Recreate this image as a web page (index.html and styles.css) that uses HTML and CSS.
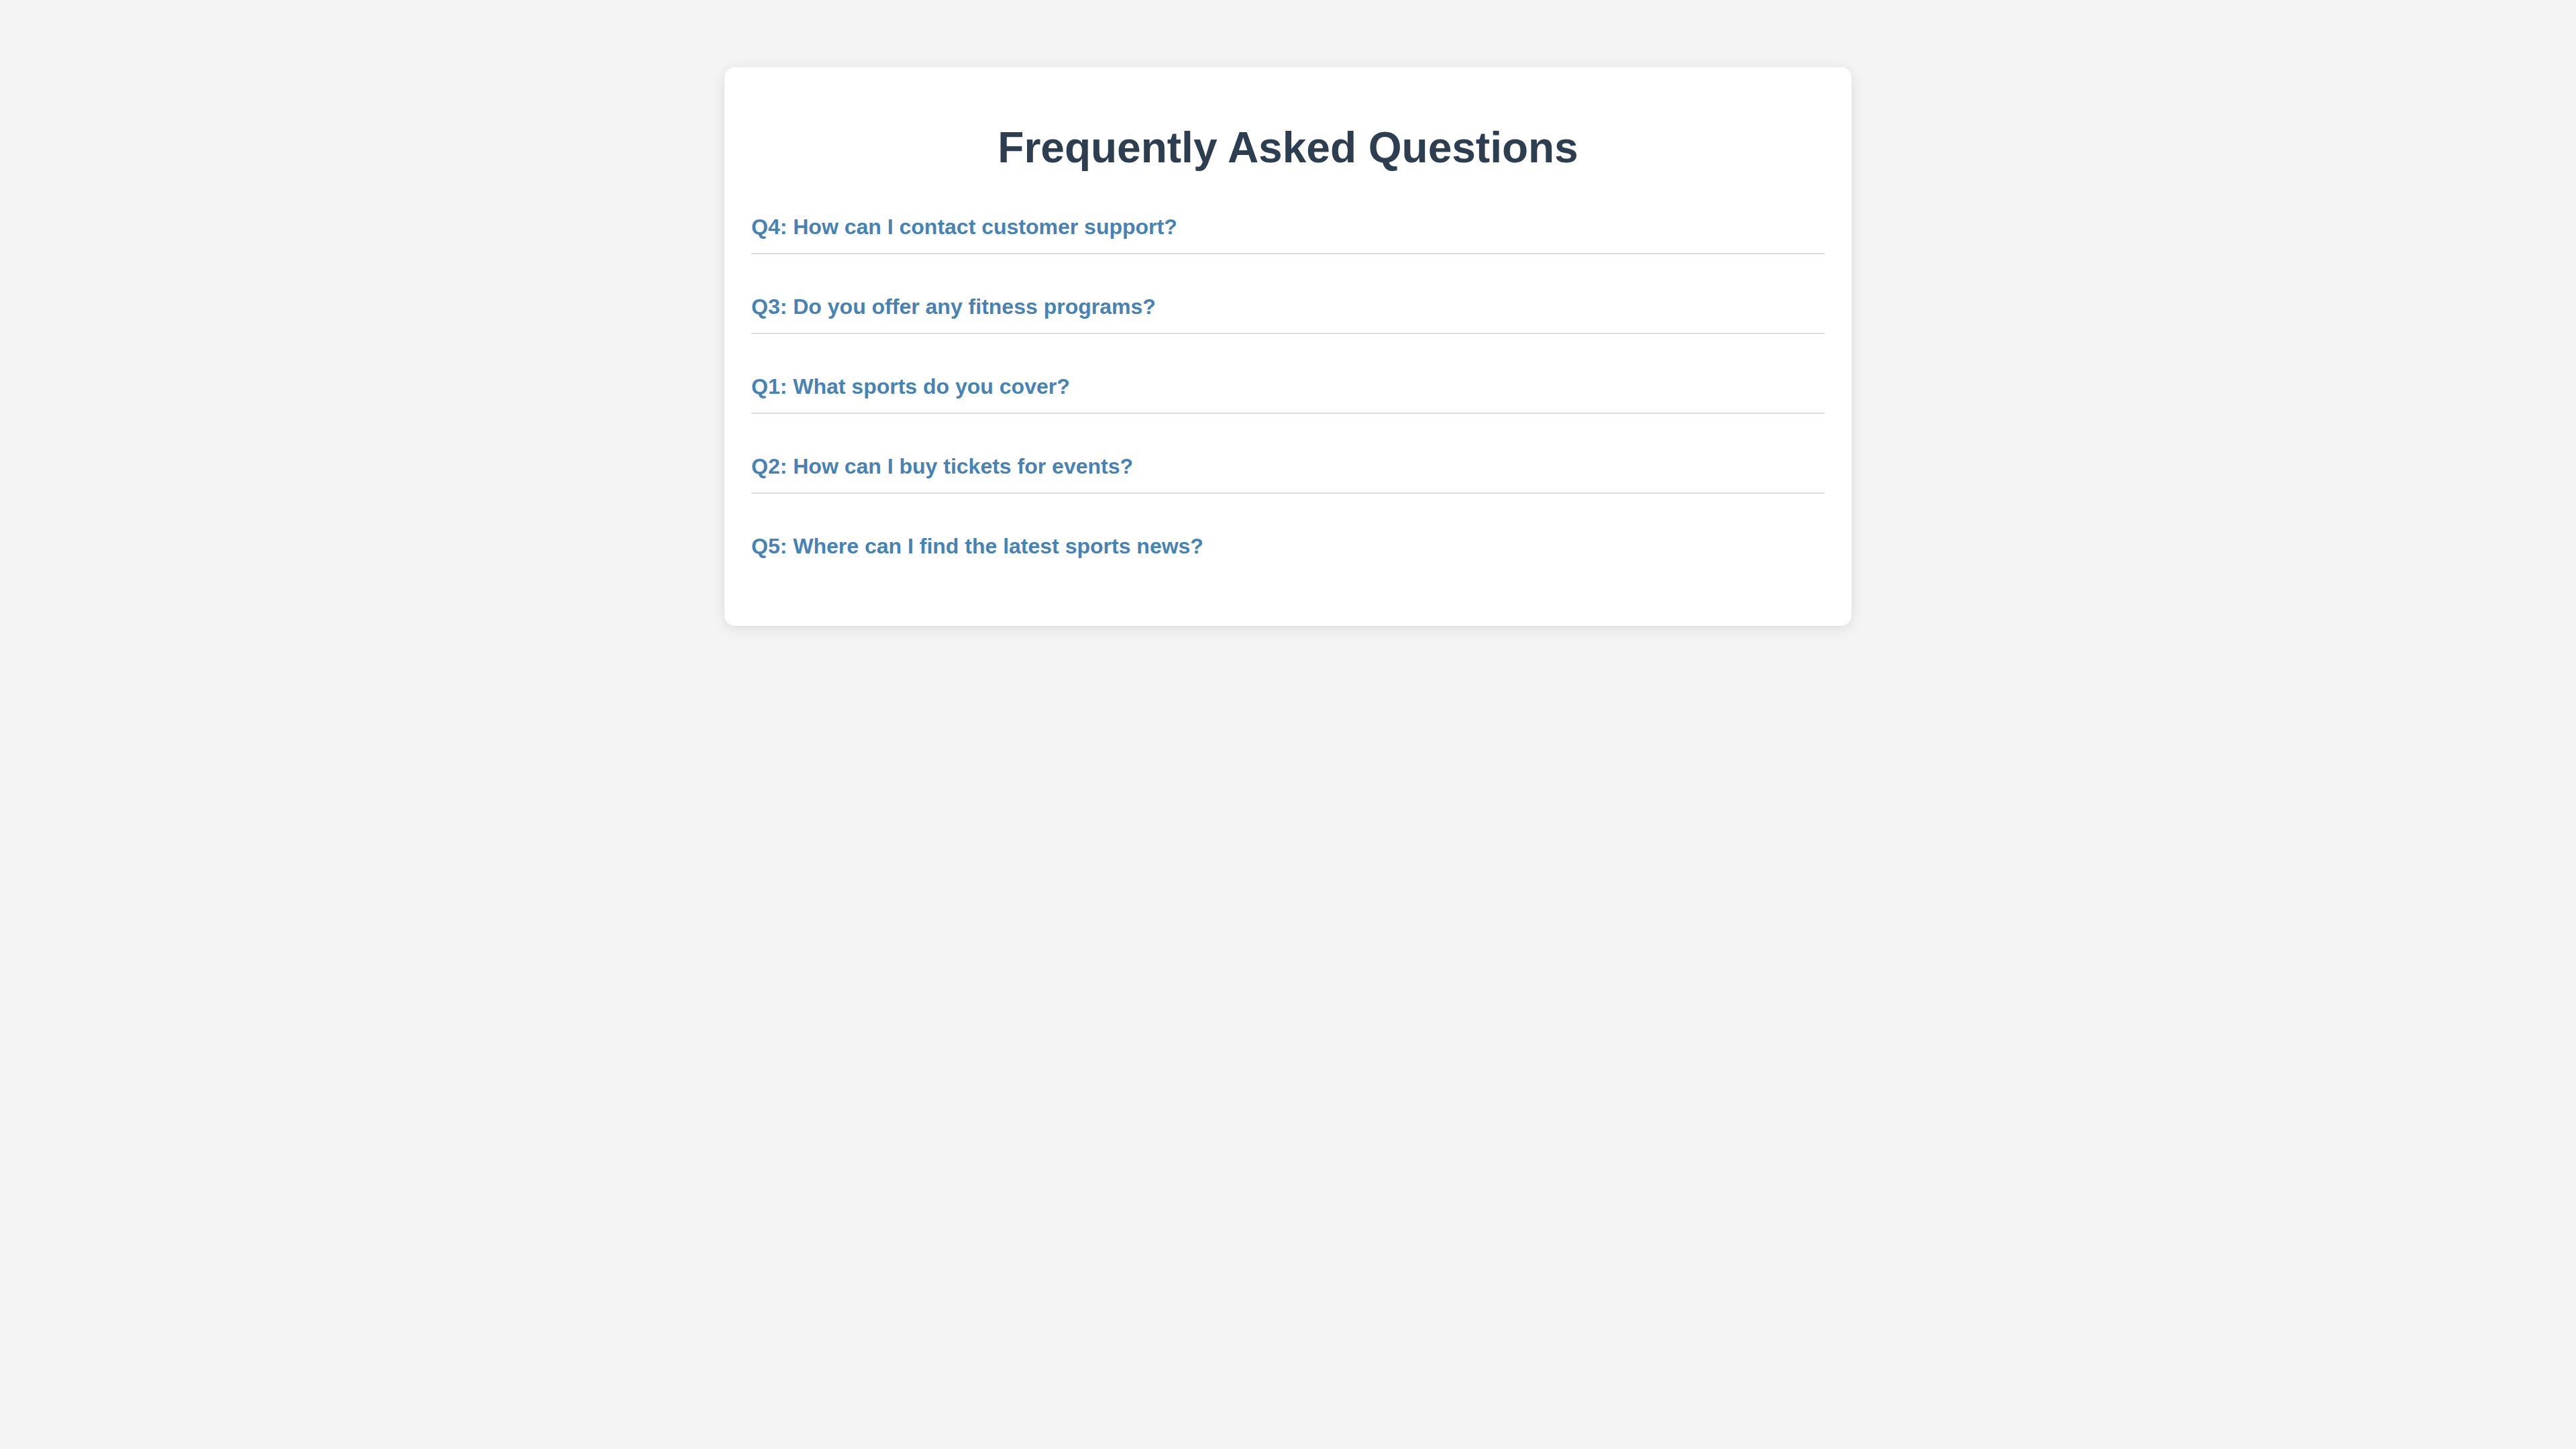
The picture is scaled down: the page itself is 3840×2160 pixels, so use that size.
FILE: index.html
```html
<!DOCTYPE html>
<html lang="en">
<head>
<meta charset="utf-8">
<title>FAQ</title>
<link rel="stylesheet" href="styles.css">
</head>
<body>
<main class="faq-container">
  <h1 class="faq-title">Frequently Asked Questions</h1>
  <div class="faq-list">
    <div class="faq-item">
      <div class="faq-question">Q4: How can I contact customer support?</div>
    </div>
    <div class="faq-item">
      <div class="faq-question">Q3: Do you offer any fitness programs?</div>
    </div>
    <div class="faq-item">
      <div class="faq-question">Q1: What sports do you cover?</div>
    </div>
    <div class="faq-item">
      <div class="faq-question">Q2: How can I buy tickets for events?</div>
    </div>
    <div class="faq-item">
      <div class="faq-question">Q5: Where can I find the latest sports news?</div>
    </div>
  </div>
</main>
</body>
</html>
```
FILE: styles.css
```css
html, body {
  margin: 0;
  padding: 0;
}

body {
  background: #f4f4f4;
  font-family: "Liberation Sans", Arial, Helvetica, sans-serif;
  color: #333333;
}

.faq-container {
  box-sizing: content-box;
  max-width: 1600px;
  margin: 100px auto;
  padding: 40px;
  background: #ffffff;
  border-radius: 16px;
  box-shadow: 0 4px 20px rgba(0, 0, 0, 0.1);
}

.faq-title {
  margin: 42.88px 0;
  font-size: 64px;
  font-weight: bold;
  text-align: center;
  color: #2c3e50;
}

.faq-item {
  margin-bottom: 40px;
  border-bottom: 2px solid #dddddd;
}

.faq-item:last-child {
  border-bottom: none;
}

.faq-question {
  padding: 20px 0;
  font-size: 32px;
  font-weight: bold;
  color: #4682b4;
  cursor: pointer;
}
```
